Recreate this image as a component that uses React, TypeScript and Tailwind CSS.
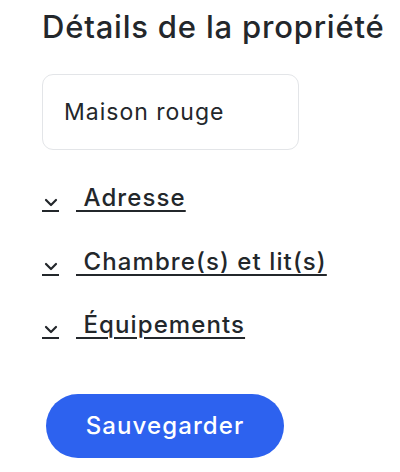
import React from "react";

const sections = ["Adresse", "Chambre(s) et lit(s)", "Équipements"];

const Chevron = () => (
  <span className="flex flex-col items-center w-[17px] border-b-2 border-[#23272b] pb-[3px]">
    <svg width="14" height="9" viewBox="0 0 14 9" fill="none">
      <path d="M2 2l5 5 5-5" stroke="#23272b" strokeWidth="2.2" strokeLinecap="round" strokeLinejoin="round" />
    </svg>
  </span>
);

const App = () => {
  return (
    <div className="w-[400px] h-[472px] bg-white pl-[42px] pt-[6px] text-[#23272b] font-['Inter',sans-serif]">
      <h1 className="text-[31px] font-medium tracking-[0.8px] leading-[42px]">
        Détails de la propriété
      </h1>
      <div className="mt-[26px] w-[257px] h-[76px] rounded-[11px] border border-[#e3e5e8] flex items-center pl-[21px] text-[23px] tracking-[1px]">
        Maison rouge
      </div>
      <div className="flex flex-col gap-[31.5px] mt-[30px]">
        {sections.map((s) => (
          <div key={s} className="flex items-end gap-[17px] h-[32px] cursor-pointer">
            <Chevron />
            <span className="text-[24px] font-medium leading-[28px] tracking-[1.1px] underline underline-offset-[4px] decoration-2">
              {"\u00a0" + s}
            </span>
          </div>
        ))}
      </div>
      <button className="mt-[55px] ml-[4px] w-[238px] h-[64px] rounded-full bg-[#2d62ef] text-white text-[24px] font-medium tracking-[1.1px]">
        Sauvegarder
      </button>
    </div>
  );
};

export default App;
